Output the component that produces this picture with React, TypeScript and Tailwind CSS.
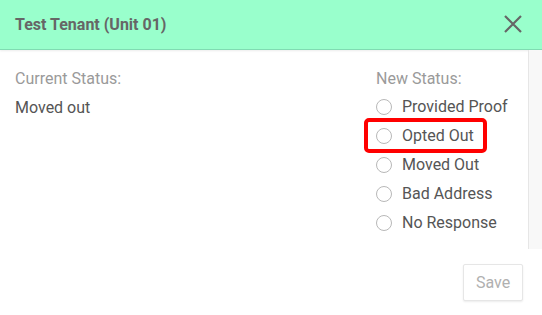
import React from "react";

const options = ["Provided Proof", "Opted Out", "Moved Out", "Bad Address", "No Response"];

export default function App() {
  return (
    <div
      className="w-[542px] h-[315px] bg-white overflow-hidden flex flex-col"
      style={{ fontFamily: "Roboto, 'Liberation Sans', sans-serif" }}
    >
      <div className="h-[50px] shrink-0 bg-[#99ffcc] border-b border-[#80dcb2] shadow-[0_1px_2px_rgba(0,0,0,0.08)] flex items-center justify-between pl-[15px] pr-[19px]">
        <div className="text-[16px] font-bold text-[#666666]">Test Tenant (Unit 01)</div>
        <svg width="20" height="20" viewBox="0 0 20 20" className="mt-[-2px]">
          <path d="M2 2 L18 18 M18 2 L2 18" stroke="#666666" strokeWidth="2.2" fill="none" />
        </svg>
      </div>
      <div className="h-[199px] shrink-0 flex">
        <div className="flex-1 flex pl-[15px] pt-[19px]">
          <div className="flex-1">
            <div className="text-[16px] leading-[20px] text-[#9a9a9a]">Current Status:</div>
            <div className="text-[16px] leading-[20px] text-[#555555] mt-[9px]">Moved out</div>
          </div>
          <div className="w-[152px] relative">
            <div className="text-[16px] leading-[20px] text-[#9a9a9a]">New Status:</div>
            <div className="flex flex-col mt-[3px]">
              {options.map((o) => (
                <label key={o} className="h-[29px] flex items-center gap-[10px]">
                  <span className="w-[16px] h-[16px] rounded-full border border-[#b8b8b8] bg-white shrink-0" />
                  <span className="text-[16px] text-[#555555]">{o}</span>
                </label>
              ))}
            </div>
            <div className="absolute left-[-12px] top-[49px] w-[123px] h-[35px] border-[4px] border-[#ff0000] rounded-[5px]" />
          </div>
        </div>
        <div className="w-[14px] bg-[#f8f8f8] border-l border-[#e6e6e6]" />
      </div>
      <div className="flex justify-end pr-[19px] pt-[15px]">
        <button className="w-[60px] h-[37px] border border-[#e6e6e6] rounded-[2px] bg-white shadow-[0_1px_2px_rgba(0,0,0,0.08)] text-[16px] text-[#b0b0b0]">
          Save
        </button>
      </div>
    </div>
  );
}
